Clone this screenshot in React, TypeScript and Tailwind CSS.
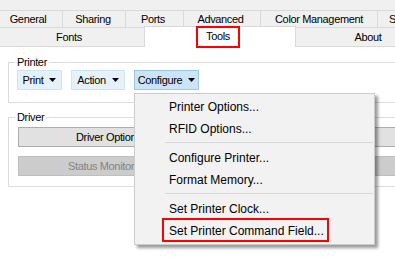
import React from "react";

function Caret() {
  return (
    <svg width="7" height="4" viewBox="0 0 7 4" className="shrink-0">
      <path d="M0 0 L7 0 L3.5 4 Z" fill="#000" />
    </svg>
  );
}

function DropButton({ label, w, active }: { label: string; w: string; active?: boolean }) {
  return (
    <div
      className={`${w} h-[20px] flex items-center justify-center gap-[6px] border ${
        active ? "bg-[#cce4f7] border-[#99c9ef]" : "bg-[#e5f1fb] border-[#cce4f7]"
      }`}
    >
      <span className="leading-[14px]">{label}</span>
      <Caret />
    </div>
  );
}

function MenuItem({ label }: { label: string }) {
  return (
    <div className="h-[22px] flex items-center pl-[34px] text-[12px] text-black leading-[14px]">
      {label}
    </div>
  );
}

function Sep() {
  return (
    <div className="h-[7px] pt-[2px] pl-[30px] pr-[1px]">
      <div className="h-[1px] bg-[#d7d7d7]" />
    </div>
  );
}

export default function App() {
  return (
    <div className="relative w-[395px] h-[263px] overflow-hidden bg-white font-['Liberation_Sans',Arial,sans-serif] text-[11px] tracking-[-0.35px] text-black">
      <div className="h-[10px] bg-[#f0f0f0]" />
      {/* tab row 1 */}
      <div className="flex h-[18px] bg-[#f0f0f0] border-t border-b border-[#d9d9d9]">
        <div className="-ml-[6px] w-[69px] shrink-0 border-r border-[#d9d9d9] flex items-center justify-center">General</div>
        <div className="w-[63px] shrink-0 border-r border-[#d9d9d9] flex items-center justify-center pr-[2px]">Sharing</div>
        <div className="w-[58px] shrink-0 border-r border-[#d9d9d9] flex items-center justify-center pr-[3px]">Ports</div>
        <div className="w-[77px] shrink-0 border-r border-[#d9d9d9] flex items-center justify-center pr-[3px]">Advanced</div>
        <div className="w-[117px] shrink-0 border-r border-[#d9d9d9] flex items-center justify-center">Color Management</div>
        <div className="w-[60px] shrink-0 flex items-center pl-[11px]">S</div>
      </div>
      {/* tab row 2 */}
      <div className="flex h-[19px] bg-[#f0f0f0]">
        <div className="-ml-[6px] w-[150px] shrink-0 border-b border-[#d9d9d9] flex items-center justify-center">Fonts</div>
        <div className="relative z-10 -mt-[2px] w-[152px] h-[21px] shrink-0 bg-white border-t border-l border-r border-[#d9d9d9] flex items-center justify-center pb-[2px] pr-[4px]">Tools</div>
        <div className="w-[144px] shrink-0 border-b border-[#d9d9d9] flex items-center justify-center">About</div>
      </div>
      {/* content */}
      <div className="pl-[8px] pt-[15px]">
        <div className="relative w-[500px] h-[41px] border border-[#dcdcdc] pl-[8px] pt-[7px]">
          <span className="absolute left-[6px] -top-[8px] px-[2px] bg-white leading-[14px]">Printer</span>
          <div className="flex gap-[9px]">
            <DropButton label="Print" w="w-[45px]" />
            <DropButton label="Action" w="w-[54px]" />
            <DropButton label="Configure" w="w-[65px]" active />
          </div>
        </div>
        <div className="relative mt-[14px] w-[500px] h-[70px] border border-[#dcdcdc] pl-[9px] pt-[9px] flex flex-col gap-[9px]">
          <span className="absolute left-[6px] -top-[8px] px-[2px] bg-white leading-[14px]">Driver</span>
          <div className="w-[480px] h-[20px] bg-[#e1e1e1] border border-[#adadad] flex items-center pl-[57px] leading-[14px]">Driver Options</div>
          <div className="w-[480px] h-[20px] bg-[#cccccc] border border-[#bfbfbf] flex items-center pl-[49px] leading-[14px] text-[#838383]">Status Monitor</div>
        </div>
      </div>
      {/* dropdown menu */}
      <div className="absolute left-[134px] top-[93px] w-[241px] bg-[#f2f2f2] border border-[#cccccc] py-[2px] tracking-normal shadow-[3px_3px_3px_rgba(0,0,0,0.4)] z-20">
        <MenuItem label="Printer Options..." />
        <MenuItem label="RFID Options..." />
        <Sep />
        <MenuItem label="Configure Printer..." />
        <MenuItem label="Format Memory..." />
        <Sep />
        <MenuItem label="Set Printer Clock..." />
        <MenuItem label="Set Printer Command Field..." />
      </div>
      {/* annotations */}
      <div className="absolute left-[196px] top-[26px] w-[44px] h-[22px] border-2 border-[#ff0000] z-30" />
      <div className="absolute left-[162px] top-[218px] w-[167px] h-[24px] border-2 border-[#ff0000] z-30" />
    </div>
  );
}
